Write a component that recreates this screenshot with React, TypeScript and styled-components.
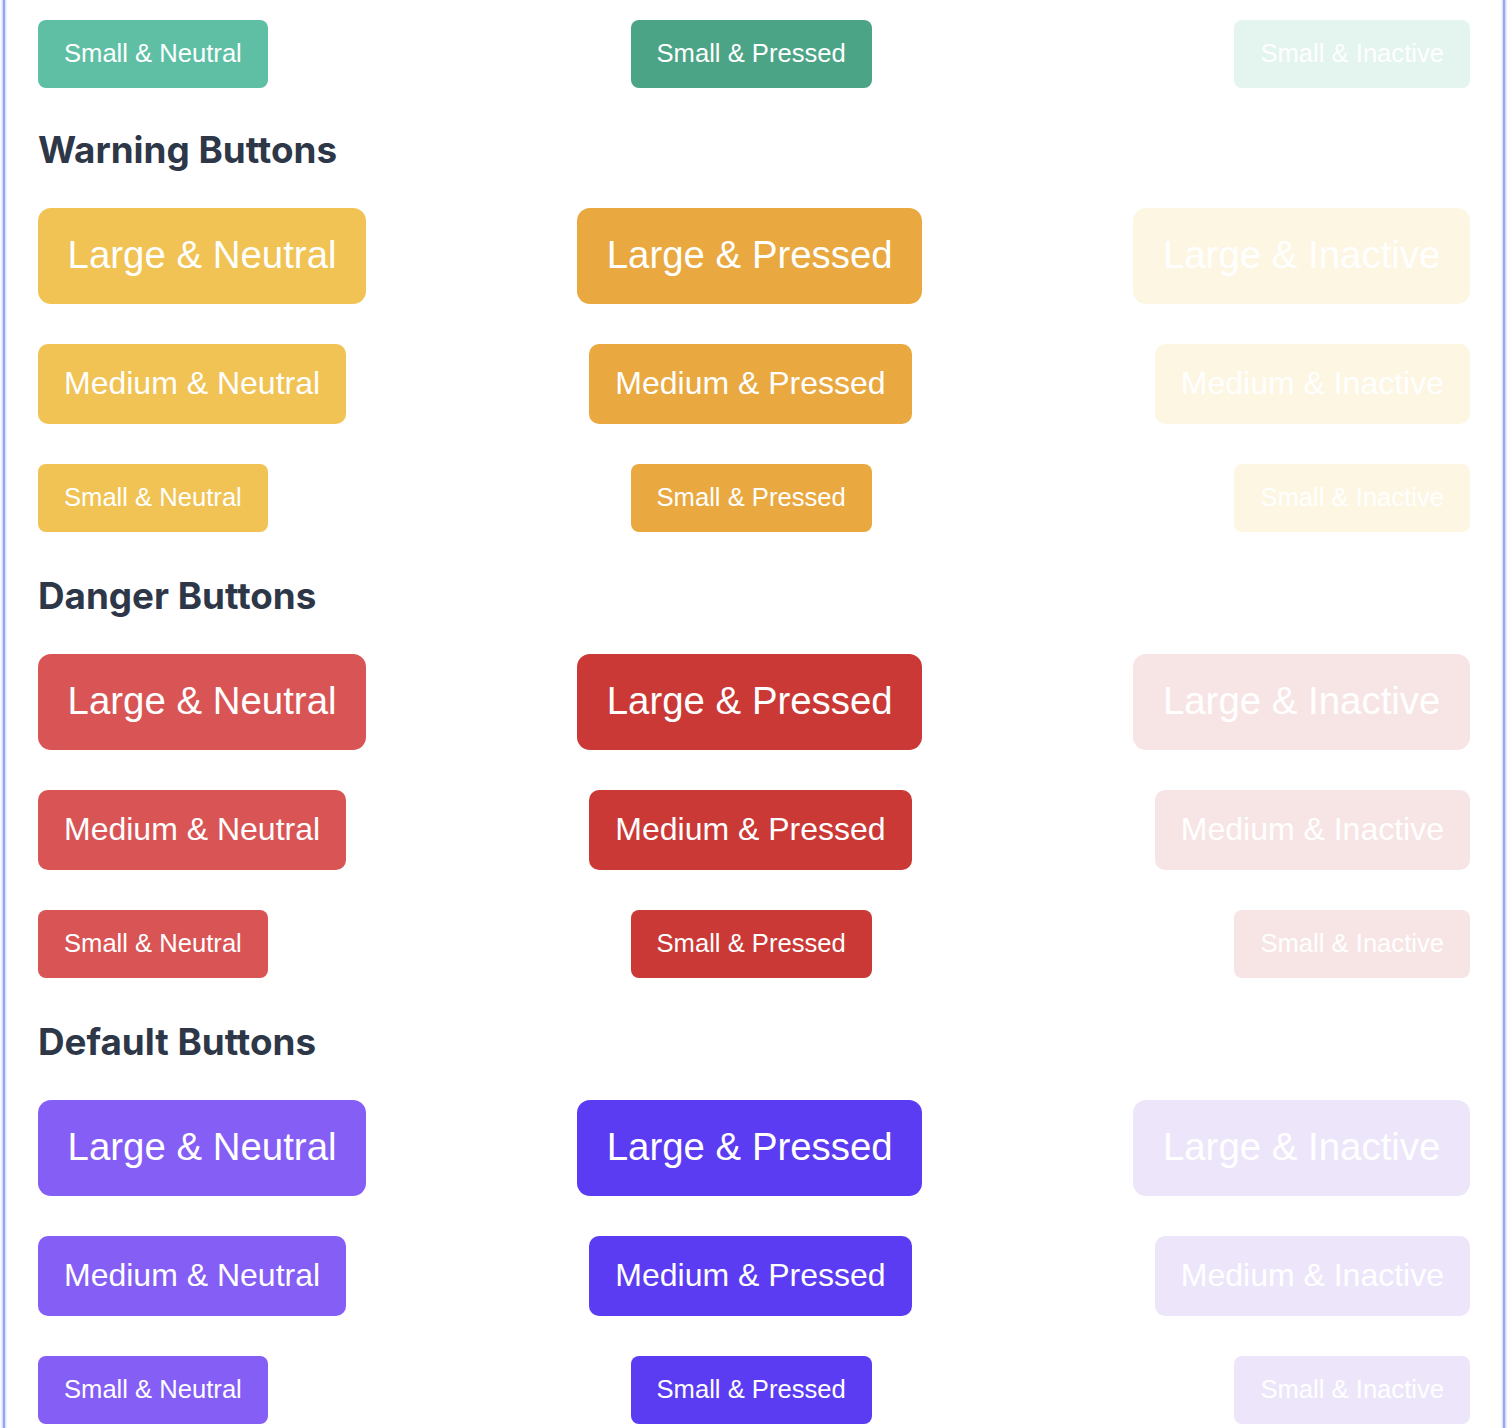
import React from "react";
import styled, { createGlobalStyle, css } from "styled-components";

const GlobalStyle = createGlobalStyle`
  html, body {
    margin: 0;
    padding: 0;
    background: #ffffff;
    overflow: hidden;
  }
  body {
    font-family: "Liberation Sans", Arial, sans-serif;
  }
  * { box-sizing: border-box; }
`;

type Size = "large" | "medium" | "small";
type State = "neutral" | "pressed" | "inactive";
type Variant = "success" | "warning" | "danger" | "default";

const palette: Record<Variant, Record<State, string>> = {
  success: { neutral: "#5ebfa5", pressed: "#4ca486", inactive: "#e4f4ef" },
  warning: { neutral: "#f0c354", pressed: "#e9a940", inactive: "#fdf6e3" },
  danger: { neutral: "#d95555", pressed: "#ca3936", inactive: "#f7e5e5" },
  default: { neutral: "#855ef5", pressed: "#5b3cf3", inactive: "#ede6fb" },
};

const sizes: Record<Size, ReturnType<typeof css>> = {
  large: css`
    height: 96px;
    padding: 0 29.6px 2px;
    font-size: 38.4px;
    border-radius: 13px;
  `,
  medium: css`
    height: 80px;
    padding: 0 26px 2px;
    font-size: 32px;
    border-radius: 10px;
  `,
  small: css`
    height: 68px;
    padding: 0 26px 0;
    font-size: 25.6px;
    border-radius: 8px;
  `,
};

const Frame = styled.div`
  margin: -12px 5px 0 3px;
  border-left: 2px solid #97a8f0;
  border-right: 2px solid #97a8f0;
  box-shadow: -1px 0 2px rgba(120, 140, 240, 0.45), 1px 0 2px rgba(120, 140, 240, 0.45),
    inset 1px 0 2px rgba(120, 140, 240, 0.35), inset -1px 0 2px rgba(120, 140, 240, 0.35);
  padding: 32px 33px 40px;
  min-height: 1500px;
`;

const Section = styled.section`
  display: flex;
  flex-direction: column;
  gap: 40px;
`;

const Heading = styled.h2`
  margin: 42px 0 36px;
  font-family: Inter, "Noto Sans", sans-serif;
  font-weight: 700;
  font-size: 36.8px;
  line-height: 44px;
  color: #2d3748;
  letter-spacing: 0;

  &:first-of-type {
    margin-top: 40px;
  }
`;

const Row = styled.div`
  display: flex;
  justify-content: space-between;
  align-items: center;
`;

const Button = styled.button<{ $size: Size; $state: State; $variant: Variant }>`
  display: inline-flex;
  align-items: center;
  justify-content: center;
  border: none;
  margin: 0;
  color: #ffffff;
  font-family: "Liberation Sans", Arial, sans-serif;
  font-weight: 400;
  line-height: 1;
  white-space: nowrap;
  cursor: ${(p) => (p.$state === "inactive" ? "not-allowed" : "pointer")};
  background: ${(p) => palette[p.$variant][p.$state]};
  ${(p) => sizes[p.$size]}
`;

const sizeLabel: Record<Size, string> = { large: "Large", medium: "Medium", small: "Small" };
const stateLabel: Record<State, string> = { neutral: "Neutral", pressed: "Pressed", inactive: "Inactive" };
const states: State[] = ["neutral", "pressed", "inactive"];

const ButtonRow: React.FC<{ size: Size; variant: Variant }> = ({ size, variant }) => (
  <Row>
    {states.map((s) => (
      <Button key={s} $size={size} $state={s} $variant={variant} disabled={s === "inactive"}>
        {sizeLabel[size]} &amp; {stateLabel[s]}
      </Button>
    ))}
  </Row>
);

const groups: { title: string; variant: Variant }[] = [
  { title: "Warning Buttons", variant: "warning" },
  { title: "Danger Buttons", variant: "danger" },
  { title: "Default Buttons", variant: "default" },
];

export default function App() {
  return (
    <>
      <GlobalStyle />
      <Frame>
        <Section>
          <ButtonRow size="small" variant="success" />
        </Section>
        {groups.map((g) => (
          <React.Fragment key={g.title}>
            <Heading>{g.title}</Heading>
            <Section>
              <ButtonRow size="large" variant={g.variant} />
              <ButtonRow size="medium" variant={g.variant} />
              <ButtonRow size="small" variant={g.variant} />
            </Section>
          </React.Fragment>
        ))}
      </Frame>
    </>
  );
}
